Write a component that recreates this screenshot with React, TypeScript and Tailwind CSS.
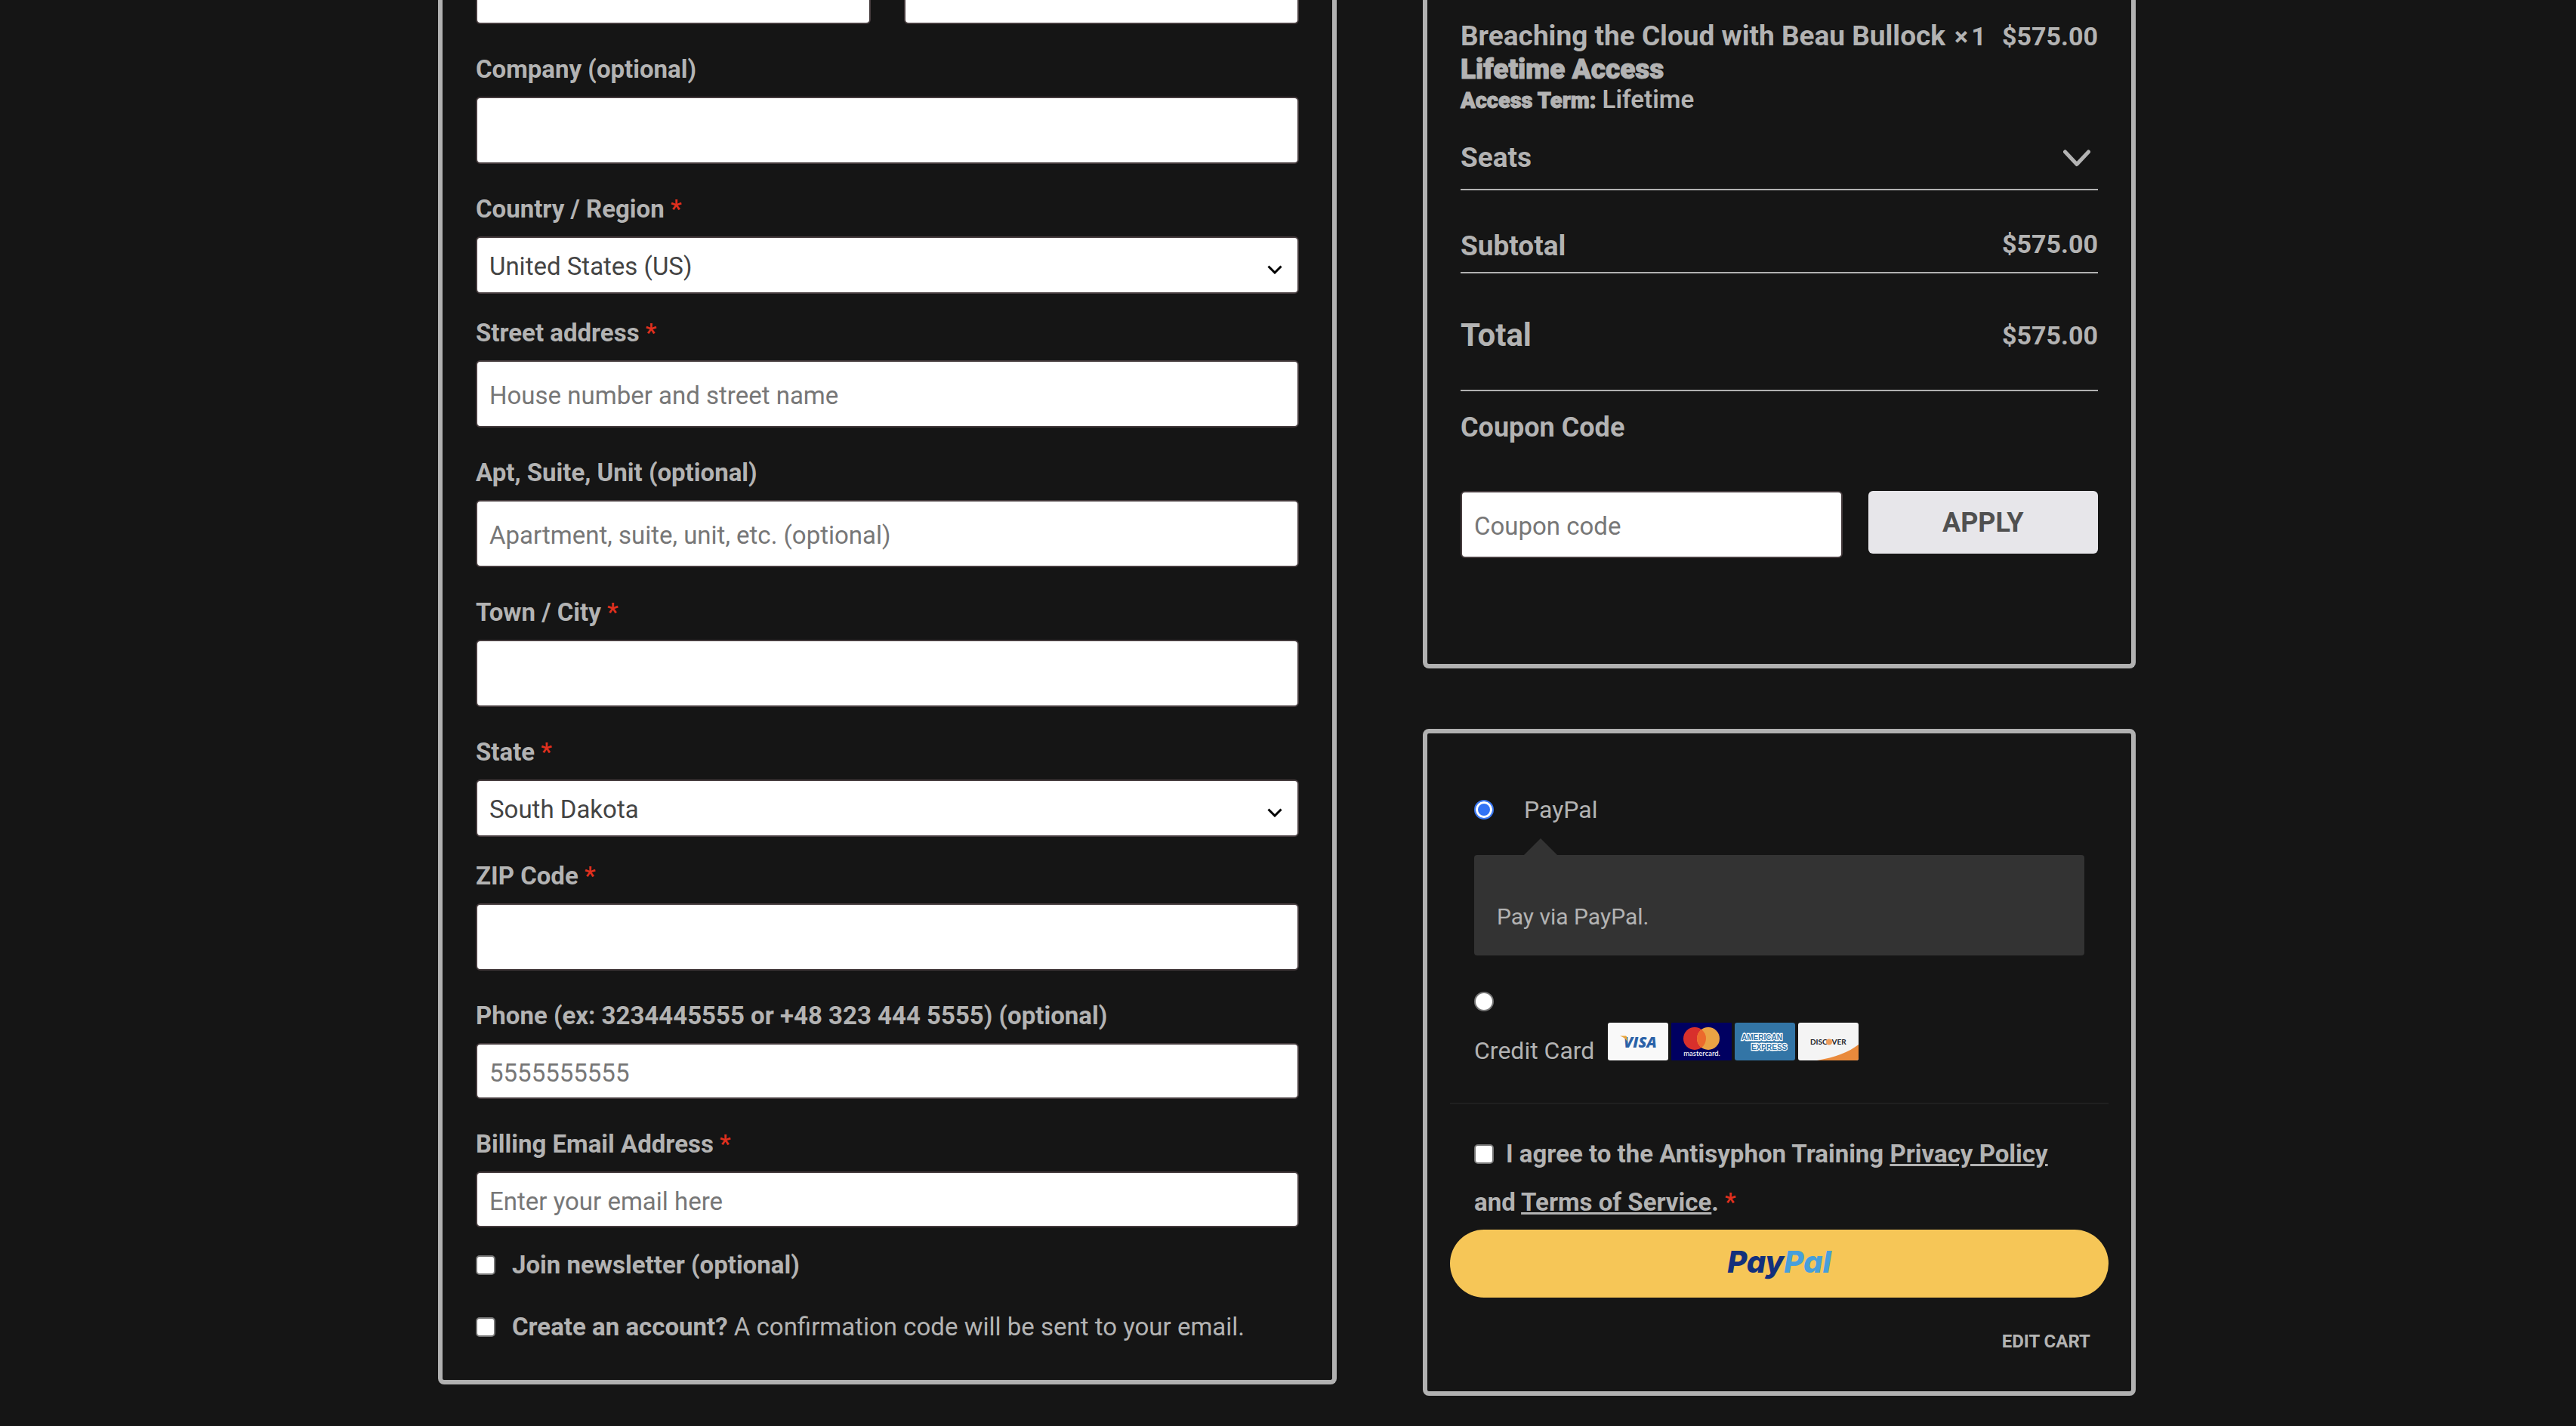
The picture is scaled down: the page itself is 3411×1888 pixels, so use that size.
import type { ReactNode } from "react";

const inputBase =
  "block w-full rounded-md border-2 border-[#453b3d] bg-white px-4 pt-1 text-[33px] text-[#444444] placeholder:text-[#777777] placeholder:opacity-100";

const checkbox =
  "size-[26px] shrink-0 appearance-none rounded-[5px] border-2 border-[#767676] bg-white";

const radio =
  "block size-[26px] shrink-0 appearance-none rounded-full border-2 border-[#767676] bg-white checked:border-[#3b78f0] checked:bg-[#3273f5] checked:shadow-[inset_0_0_0_3px_#ffffff]";

function Required() {
  return <span className="font-medium text-[#e0301e]">*</span>;
}

function Label({ id, required, children }: { id: string; required?: boolean; children: ReactNode }) {
  return (
    <label htmlFor={id} className="mb-3 block text-[33px] leading-[48px] font-bold whitespace-nowrap">
      {children} {required && <Required />}
    </label>
  );
}

function TextField(props: {
  id: string;
  label: string;
  required?: boolean;
  placeholder?: string;
  type?: string;
  compact?: boolean;
}) {
  return (
    <div>
      <Label id={props.id} required={props.required}>
        {props.label}
      </Label>
      <input
        id={props.id}
        type={props.type ?? "text"}
        placeholder={props.placeholder}
        className={`${inputBase} ${props.compact ? "h-[74px]" : "h-[89px]"}`}
      />
    </div>
  );
}

function SelectField(props: { id: string; label: string; options: string[] }) {
  return (
    <div className="-mb-2">
      <Label id={props.id} required>
        {props.label}
      </Label>
      <div className="relative">
        <select id={props.id} className={`${inputBase} h-[76px] appearance-none`}>
          {props.options.map((option) => (
            <option key={option}>{option}</option>
          ))}
        </select>
        <svg
          className="pointer-events-none absolute top-[38px] right-[22px] h-3 w-5"
          viewBox="0 0 20 12"
          fill="none"
          stroke="#000000"
          strokeWidth="3"
          aria-hidden="true"
        >
          <path d="M1.5 1.5 10 10l8.500-8.500" />
        </svg>
      </div>
    </div>
  );
}

function BillingPanel() {
  return (
    <section className="rounded-b-lg border-6 border-t-0 border-[#b1b1b1] px-11 pb-[46px]">
      <div className="mb-9 grid grid-cols-2 gap-11">
        <input aria-label="First name" className={`${inputBase} h-8 rounded-t-none border-t-0`} />
        <input aria-label="Last name" className={`${inputBase} h-8 rounded-t-none border-t-0`} />
      </div>
      <div className="flex flex-col gap-9">
        <TextField id="company" label="Company (optional)" />
        <SelectField id="country" label="Country / Region" options={["United States (US)", "Canada"]} />
        <TextField id="street" label="Street address" required placeholder="House number and street name" />
        <TextField id="unit" label="Apt, Suite, Unit (optional)" placeholder="Apartment, suite, unit, etc. (optional)" />
        <TextField id="city" label="Town / City" required />
        <SelectField id="state" label="State" options={["South Dakota", "North Dakota"]} />
        <TextField id="zip" label="ZIP Code" required />
        <TextField
          id="phone"
          type="tel"
          label="Phone (ex: 3234445555 or +48 323 444 5555) (optional)"
          placeholder="5555555555"
          compact
        />
        <TextField
          id="email"
          type="email"
          label="Billing Email Address"
          required
          placeholder="Enter your email here"
          compact
        />
      </div>
      <div className="mt-[26px] flex flex-col gap-[34px] text-[33px] leading-[48px] whitespace-nowrap">
        <label className="flex items-center gap-[22px] font-bold">
          <input type="checkbox" className={checkbox} />
          <span>Join newsletter (optional)</span>
        </label>
        <label className="flex items-center gap-[22px]">
          <input type="checkbox" className={checkbox} />
          <span>
            <b className="font-bold">Create an account?</b> A confirmation code will be sent to your email.
          </span>
        </label>
      </div>
    </section>
  );
}

function SummaryPanel() {
  return (
    <section className="rounded-b-lg border-6 border-t-0 border-[#b1b1b1] px-11 pt-[26px] pb-[140px]">
      <table className="w-full border-collapse text-left text-[37px] leading-[44px] font-bold whitespace-nowrap">
        <tbody>
          <tr>
            <th className="p-0 align-top font-bold">
              <div className="flex gap-3">
                <span>Breaching the Cloud with Beau Bullock</span>
                <span className="flex gap-1 text-[34px]">
                  <span>×</span>
                  <span>1</span>
                </span>
              </div>
              <div className="font-black [-webkit-text-stroke:1px_#b3b3b3]">Lifetime Access</div>
              <div className="text-[33px] leading-[36px] font-semibold">
                <b className="text-[29px] font-black [-webkit-text-stroke:1px_#b3b3b3]">Access Term:</b> Lifetime
              </div>
            </th>
            <td className="p-0 text-right align-top text-[34px]">$575.00</td>
          </tr>
          <tr className="border-b-2 border-[#b1b1b1]">
            <td colSpan={2} className="p-0">
              <button type="button" className="flex h-[99px] w-full items-center justify-between pt-4 pr-2.5">
                <span>Seats</span>
                <svg
                  className="h-6 w-9"
                  viewBox="0 0 36 24"
                  fill="none"
                  stroke="#b3b3b3"
                  strokeWidth="5"
                  strokeLinecap="round"
                  strokeLinejoin="round"
                  aria-hidden="true"
                >
                  <path d="M2.500 4 18 20.500 33.500 4" />
                </svg>
              </button>
            </td>
          </tr>
          <tr className="border-b-2 border-[#b1b1b1]">
            <th className="pt-[52px] pb-3 align-top font-bold">Subtotal</th>
            <td className="pt-[52px] pb-3 text-right align-top text-[34px] leading-[38px]">$575.00</td>
          </tr>
          <tr className="h-[156px] border-b-2 border-[#b1b1b1]">
            <th className="pt-2.5 text-[42px] font-bold">Total</th>
            <td className="pt-2.5 text-right text-[34px]">$575.00</td>
          </tr>
        </tbody>
      </table>
      <label htmlFor="coupon" className="mt-[26px] block text-[36px] leading-[44px] font-bold">
        Coupon Code
      </label>
      <div className="mt-[62px] flex items-start gap-[34px]">
        <div className="flex-[505]">
          <input id="coupon" placeholder="Coupon code" className={`${inputBase} h-[89px]`} />
        </div>
        <button
          type="button"
          className="h-[83px] flex-[304] rounded-md bg-[#e7e6ea] text-[36px] font-bold text-[#505050]"
        >
          APPLY
        </button>
      </div>
    </section>
  );
}

function VisaCard() {
  return (
    <svg className="h-[50px] w-20" viewBox="0 0 80 50" role="img" aria-label="Visa">
      <rect width="80" height="50" rx="3" fill="#f9f9f9" />
      <text x="21" y="32.500" fontFamily="Open Sans" fontWeight="800" fontStyle="italic" fontSize="20" fill="#2b62a8">
        VISA
      </text>
      <path d="M16 17.500h7c1.500 0 2 .5 2.200 2l1 6c-2-3.500-5-6.500-10.200-8Z" fill="#e9a63c" />
    </svg>
  );
}

function MastercardCard() {
  return (
    <svg className="h-[50px] w-20" viewBox="0 0 80 50" role="img" aria-label="Mastercard">
      <rect width="80" height="50" rx="1" fill="#000061" />
      <circle cx="31" cy="21" r="15" fill="#d8302c" />
      <circle cx="49" cy="21" r="15" fill="#eaa344" />
      <path d="M40 9a15 15 0 0 1 0 24 15 15 0 0 1 0-24Z" fill="#ec6a2c" />
      <text x="40.500" y="44" textAnchor="middle" fontFamily="Lato" fontWeight="500" fontSize="9.500" fill="#ffffff">
        mastercard.
      </text>
    </svg>
  );
}

function AmexCard() {
  return (
    <svg className="h-[50px] w-20" viewBox="0 0 80 50" role="img" aria-label="American Express">
      <rect width="80" height="50" rx="3" fill="#3375a6" />
      <g
        fontFamily="Liberation Sans"
        fontWeight="700"
        fontSize="10"
        fill="#2f74a8"
        stroke="#ffffff"
        strokeWidth="2.400"
        paintOrder="stroke"
      >
        <text x="9" y="22.500">
          AMERICAN
        </text>
        <text x="22" y="35.500">
          EXPRESS
        </text>
      </g>
    </svg>
  );
}

function DiscoverCard() {
  return (
    <svg className="h-[50px] w-20" viewBox="0 0 80 50" role="img" aria-label="Discover">
      <rect width="80" height="50" rx="3" fill="#f4f4f4" />
      <path d="M80 29v18a3 3 0 0 1-3 3H25c24-4 42-11 55-21Z" fill="#e98a3c" />
      <g fontFamily="Lato" fontWeight="700" fontSize="10" fill="#20232a">
        <text x="16" y="29">
          DISC
        </text>
        <text x="44.500" y="29">
          VER
        </text>
      </g>
      <circle cx="41" cy="25.500" r="4" fill="#ee9c5a" />
    </svg>
  );
}

function PaymentPanel() {
  return (
    <section className="rounded-lg border-6 border-[#b1b1b1] px-[30px] pt-[69px] pb-12 text-[33px]">
      <div className="border-b-2 border-[#202020] px-8 pb-14">
        <label className="flex items-center gap-10 text-[32px] leading-[64px]">
          <input type="radio" name="payment" defaultChecked className={radio} />
          <span>PayPal</span>
        </label>
        <div className="relative mt-7 rounded bg-[#333333] px-[30px] pt-[58px] pb-[27px] text-[30px] leading-[48px]">
          <svg className="absolute bottom-full left-[66px] h-[22px] w-11" viewBox="0 0 44 22" aria-hidden="true">
            <path d="M0 22 22 0l22 22Z" fill="#333333" />
          </svg>
          Pay via PayPal.
        </div>
        <div className="mt-12">
          <input id="card" type="radio" name="payment" className={radio} />
          <label htmlFor="card" className="mt-[15px] flex items-end gap-1 text-[32px] leading-[26px]">
            <span className="mr-3.5">Credit Card</span>
            <VisaCard />
            <MastercardCard />
            <AmexCard />
            <DiscoverCard />
          </label>
        </div>
      </div>
      <div className="mt-[34px] pr-16 pl-8 leading-[64px] font-bold">
        <input id="terms" type="checkbox" className={`${checkbox} mr-4 align-[-2px]`} />
        <label htmlFor="terms">
          I agree to the Antisyphon Training{" "}
          <a href="#privacy" className="whitespace-nowrap underline">
            Privacy Policy
          </a>{" "}
          and{" "}
          <a href="#terms-of-service" className="underline">
            Terms of Service
          </a>
          . <Required />
        </label>
      </div>
      <button
        type="button"
        aria-label="PayPal"
        className="mt-1 flex h-[90px] w-full items-center justify-center rounded-full bg-[#f6c657] pb-1 font-['Inter'] text-[40px] font-extrabold text-[#13307c] italic"
      >
        <span>Pay</span>
        <span className="text-[#479fdb]">Pal</span>
      </button>
      <div className="mt-10 pr-6 text-right text-[24px] leading-[36px] font-bold">
        <a href="#cart">EDIT CART</a>
      </div>
    </section>
  );
}

export default function App() {
  return (
    <main className="min-h-screen bg-[#151515] font-['Roboto',sans-serif] text-[#b3b3b3]">
      <form className="mx-auto grid max-w-[2251px] grid-cols-[1190fr_944fr] items-start gap-[114px] pr-[3px]">
        <BillingPanel />
        <div className="flex flex-col gap-20">
          <SummaryPanel />
          <PaymentPanel />
        </div>
      </form>
    </main>
  );
}
